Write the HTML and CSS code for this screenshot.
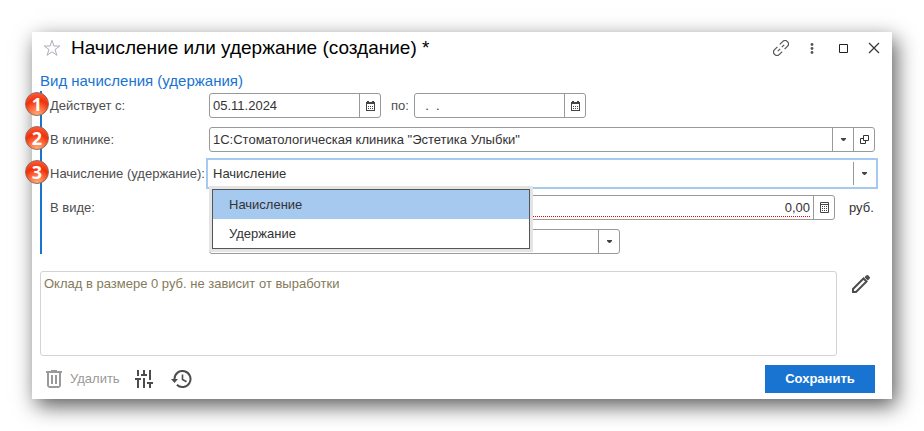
FILE: index.html
```html
<!DOCTYPE html>
<html lang="ru">
<head>
<meta charset="utf-8">
<title>Начисление или удержание (создание)</title>
<link rel="stylesheet" href="styles.css">
</head>
<body>
<main class="window">
  <header class="titlebar">
    <button class="icon-btn" type="button" aria-label="В избранное">
      <svg width="18" height="18" viewBox="0 0 18 18" fill="none" stroke="#a9b0b8"><path d="M9 1.3 10.9 7h5.9l-4.8 3.5 1.9 5.8L9 12.8l-4.9 3.5L6 10.500 1.200 7h5.900z"/></svg>
    </button>
    <h1 class="title">Начисление или удержание (создание) *</h1>
    <div class="window-tools">
      <button class="icon-btn" type="button" aria-label="Ссылка">
        <svg width="16" height="16" viewBox="0 0 16 16" fill="none" stroke="#555" stroke-width="1.200"><path d="M4.800 11.200l2.400-2.400M8.800 7.200l2.400-2.400M6.800 4.400l2.800-2.800a3.300 3.300 0 0 1 4.800 4.800L11.600 9.200M9.200 11.600l-2.800 2.800a3.300 3.300 0 0 1-4.800-4.800L4.400 6.800"/></svg>
      </button>
      <button class="icon-btn" type="button" aria-label="Ещё">
        <svg width="16" height="16" viewBox="0 0 16 16" fill="#555"><circle cx="8" cy="4.500" r="1.400"/><circle cx="8" cy="8.500" r="1.400"/><circle cx="8" cy="12.500" r="1.400"/></svg>
      </button>
      <button class="icon-btn" type="button" aria-label="Развернуть">
        <svg width="16" height="16" viewBox="0 0 16 16" fill="none" stroke="#222"><path d="M4.500 4.500h8v8h-8z"/></svg>
      </button>
      <button class="icon-btn" type="button" aria-label="Закрыть">
        <svg width="16" height="16" viewBox="0 0 16 16" fill="none" stroke="#333" stroke-width="1.200"><path d="M3 3l10 10M13 3L3 13"/></svg>
      </button>
    </div>
  </header>

  <h2 class="section-title">Вид начисления (удержания)</h2>
  <form class="fields">
    <div class="row">
      <span class="badge">1</span>
      <label class="label" for="from">Действует с:</label>
      <div class="field date">
        <input id="from" type="text" value="05.11.2024">
        <button class="field-btn" type="button" aria-label="Выбрать дату начала">
          <svg width="9" height="10" viewBox="0 0 9 10"><path fill="#444" fill-rule="evenodd" d="M1 0h2v1h3V0h2v1h1v9H0V1h1zM1 3v6h7V3z"/><path stroke="#444" stroke-dasharray="1 1" d="M2 5.500h5M2 7.500h5"/></svg>
        </button>
      </div>
      <label class="label-inline" for="to">по:</label>
      <div class="field date">
        <input id="to" type="text" value="  .  .">
        <button class="field-btn" type="button" aria-label="Выбрать дату окончания">
          <svg width="9" height="10" viewBox="0 0 9 10"><path fill="#444" fill-rule="evenodd" d="M1 0h2v1h3V0h2v1h1v9H0V1h1zM1 3v6h7V3z"/><path stroke="#444" stroke-dasharray="1 1" d="M2 5.500h5M2 7.500h5"/></svg>
        </button>
      </div>
    </div>
    <div class="row">
      <span class="badge">2</span>
      <label class="label" for="clinic">В клинике:</label>
      <div class="field wide">
        <select id="clinic"><option>1С:Стоматологическая клиника "Эстетика Улыбки"</option></select>
        <span class="field-btn"><svg width="5" height="3" viewBox="0 0 5 3" fill="#444"><path d="M0 0h5v1L3 3H2L0 1z"/></svg></span>
        <button class="field-btn" type="button" aria-label="Открыть клинику">
          <svg width="9" height="9" viewBox="0 0 9 9" fill="none" stroke="#333"><path d="M3.500.5h5v5h-5zM3.500 3.500h-3v5h5v-3"/></svg>
        </button>
      </div>
    </div>
    <div class="row">
      <span class="badge">3</span>
      <label class="label" for="kind">Начисление (удержание):</label>
      <div class="field wide focused">
        <select id="kind"><option>Начисление</option><option>Удержание</option></select>
        <span class="field-btn"><svg width="5" height="3" viewBox="0 0 5 3" fill="#444"><path d="M0 0h5v1L3 3H2L0 1z"/></svg></span>
        <ul class="menu" role="listbox" aria-label="Начисление (удержание)">
          <li class="option selected" role="option" aria-selected="true">Начисление</li>
          <li class="option" role="option" aria-selected="false">Удержание</li>
        </ul>
      </div>
    </div>
    <div class="row">
      <label class="label" for="amount">В виде:</label>
      <div class="field wide">
        <div class="amount"><input id="amount" type="text" value="0,00"></div>
        <button class="field-btn" type="button" aria-label="Калькулятор">
          <svg width="9" height="11" viewBox="0 0 9 11" fill="none" stroke="#444"><path d="M.5.5h8v10h-8zM0 2.500h9"/><path stroke-dasharray="1 1" d="M2 4.500h5M2 6.500h5M2 8.500h5"/></svg>
        </button>
      </div>
      <span class="unit">руб.</span>
    </div>
    <div class="row">
      <div class="label"></div>
      <div class="field basis">
        <select aria-label="Зависимость"><option></option></select>
        <span class="field-btn"><svg width="5" height="3" viewBox="0 0 5 3" fill="#444"><path d="M0 0h5v1L3 3H2L0 1z"/></svg></span>
      </div>
    </div>
  </form>

  <section class="summary">
    <textarea class="note" aria-label="Описание" readonly>Оклад в размере 0 руб. не зависит от выработки</textarea>
    <button class="icon-btn" type="button" aria-label="Изменить описание">
      <svg width="18" height="18" viewBox="0 0 18 18"><path fill="none" stroke="#4d4d4d" stroke-width="2" d="M1 17v-3L11.500 3.500l3 3L4 17z"/><path fill="#4d4d4d" d="M12.500 2.200 14.200.5a1.500 1.500 0 0 1 2.100 0l1.200 1.200a1.500 1.500 0 0 1 0 2.100L15.800 5.500z"/></svg>
    </button>
  </section>

  <footer class="actions">
    <button class="delete" type="button" disabled>
      <svg width="16" height="18" viewBox="0 0 16 18" fill="#9a9a9a"><path d="M5 0h6v1h5v2H0V1h5z"/><path fill-rule="evenodd" d="M1 3h14v13l-2 2H3l-2-2zM3 3v13h10V3z"/><path d="M5 5h2v9H5zM9 5h2v9H9z"/></svg>
      Удалить
    </button>
    <button class="icon-btn" type="button" aria-label="Настройки">
      <svg width="18" height="18" viewBox="0 0 18 18" fill="#4d4d4d"><path d="M2 0h2v6H2zM0 8h6v2H4v8H2v-8H0zM8 0h2v4h2v2H6V4h2zM8 8h2v10H8zM14 0h2v10h-2zM12 12h6v2h-2v4h-2v-4h-2z"/></svg>
    </button>
    <button class="icon-btn history" type="button" aria-label="История">
      <svg width="21" height="18" viewBox="0 0 21 18" fill="none" stroke="#4d4d4d" stroke-width="2"><path d="M3.500 9a8 8 0 1 1 2.400 5.700"/><path stroke-width="1.600" d="M11.500 4.500V9.500l4 2.300"/><path fill="#4d4d4d" stroke="none" d="M0 9h7l-3.500 4z"/></svg>
    </button>
    <button class="save" type="submit">Сохранить</button>
  </footer>
</main>
</body>
</html>
```
FILE: styles.css
```css
* { box-sizing: border-box; }

body {
  margin: 0;
  padding: 32px;
  background: #fff;
  color: #333;
  font: 13px/16px "Liberation Sans", Arial, sans-serif;
}

button, input, select, textarea {
  margin: 0;
  padding: 0;
  border: 0;
  background: none;
  color: inherit;
  font: inherit;
  outline: 0;
}

svg { display: block; }

.window {
  padding: 0 14px 6px 8px;
  background: #fff;
  box-shadow: 4px 7px 20px rgba(0, 0, 0, 0.65);
}

.titlebar {
  display: flex;
  align-items: center;
  gap: 10px;
  height: 32px;
  margin-right: -4px;
  padding-left: 3px;
}

.icon-btn {
  display: flex;
  flex: none;
}

.title {
  flex: 1;
  margin: 0;
  color: #000;
  font-size: 19px;
  font-weight: 400;
  line-height: 24px;
}

.window-tools {
  display: flex;
  gap: 15px;
}

.section-title {
  margin: 0;
  padding-top: 7px;
  color: #1874d0;
  font-size: 15px;
  font-weight: 400;
  line-height: 20px;
}

.fields {
  display: flex;
  flex-direction: column;
  gap: 9px;
  margin-right: 3px;
  padding: 2px 0 0 8px;
  border-left: 2px solid #1874d0;
}

.row {
  position: relative;
  display: flex;
  align-items: center;
  height: 25px;
}

.badge {
  position: absolute;
  left: -25px;
  top: -1px;
  width: 24px;
  height: 24px;
  border: 1px solid #8f6a5c;
  border-radius: 50%;
  background: radial-gradient(circle at 50% 100%, #ffb27a 0, #ff6a3c 35%, #f0300a 60%, #ff6b4a 100%);
  color: #fff;
  font: bold 18px/22px "Open Sans", sans-serif;
  text-align: center;
}

.label {
  flex: none;
  width: 159px;
  color: #4d4d4d;
  white-space: nowrap;
}

.label-inline {
  width: 33px;
  padding-left: 10px;
  color: #4d4d4d;
}

.field {
  position: relative;
  display: flex;
  height: 25px;
  border: 1px solid #999;
  border-radius: 3px;
  background: #fff;
}

.date { width: 172px; }
.wide { flex: 1; }
.basis { width: 411px; }

.field input,
.field select {
  flex: 1;
  min-width: 0;
  width: 100%;
  padding: 0 3px;
  appearance: none;
}

.field-btn {
  display: flex;
  flex: none;
  align-items: center;
  justify-content: center;
  width: 21px;
  border-left: 1px solid #999;
}

.focused {
  height: 31px;
  margin: 0 -3px;
  padding: 2px;
  border: 2px solid #a6c9ef;
  border-radius: 0;
}

.amount {
  display: flex;
  flex: 1;
  padding-right: 3px;
}

.field .amount input {
  height: 21px;
  padding: 2px 0 0;
  border-bottom: 1px dotted #f00;
  text-align: right;
}

.unit {
  width: 40px;
  padding-left: 14px;
}

.menu {
  position: absolute;
  z-index: 2;
  top: 29px;
  left: 4px;
  width: 318px;
  margin: 0;
  padding: 0;
  border: 1px solid #555;
  background: #fff;
  box-shadow: 0 0 0 3px #e4e4e4;
  list-style: none;
}

.option {
  padding: 0 16px;
  line-height: 29px;
}

.selected { background: #a6c9ef; }

.summary {
  display: flex;
  align-items: flex-start;
  gap: 15px;
  padding: 17px 8px 0 0;
}

.summary .icon-btn { padding-top: 4px; }

.note {
  flex: 1;
  height: 85px;
  padding: 4px 3px;
  border: 1px solid #d3d3d3;
  border-radius: 3px;
  color: #857a5a;
  resize: none;
}

.actions {
  display: flex;
  align-items: center;
  padding: 9px 3px 0 6px;
}

.delete {
  display: flex;
  align-items: center;
  gap: 8px;
  margin-right: 15px;
  color: #999;
}

.history { margin-left: 18px; }

.save {
  width: 110px;
  height: 28px;
  margin-left: auto;
  background: #1874d0;
  color: #fff;
  font-weight: 700;
}
```
